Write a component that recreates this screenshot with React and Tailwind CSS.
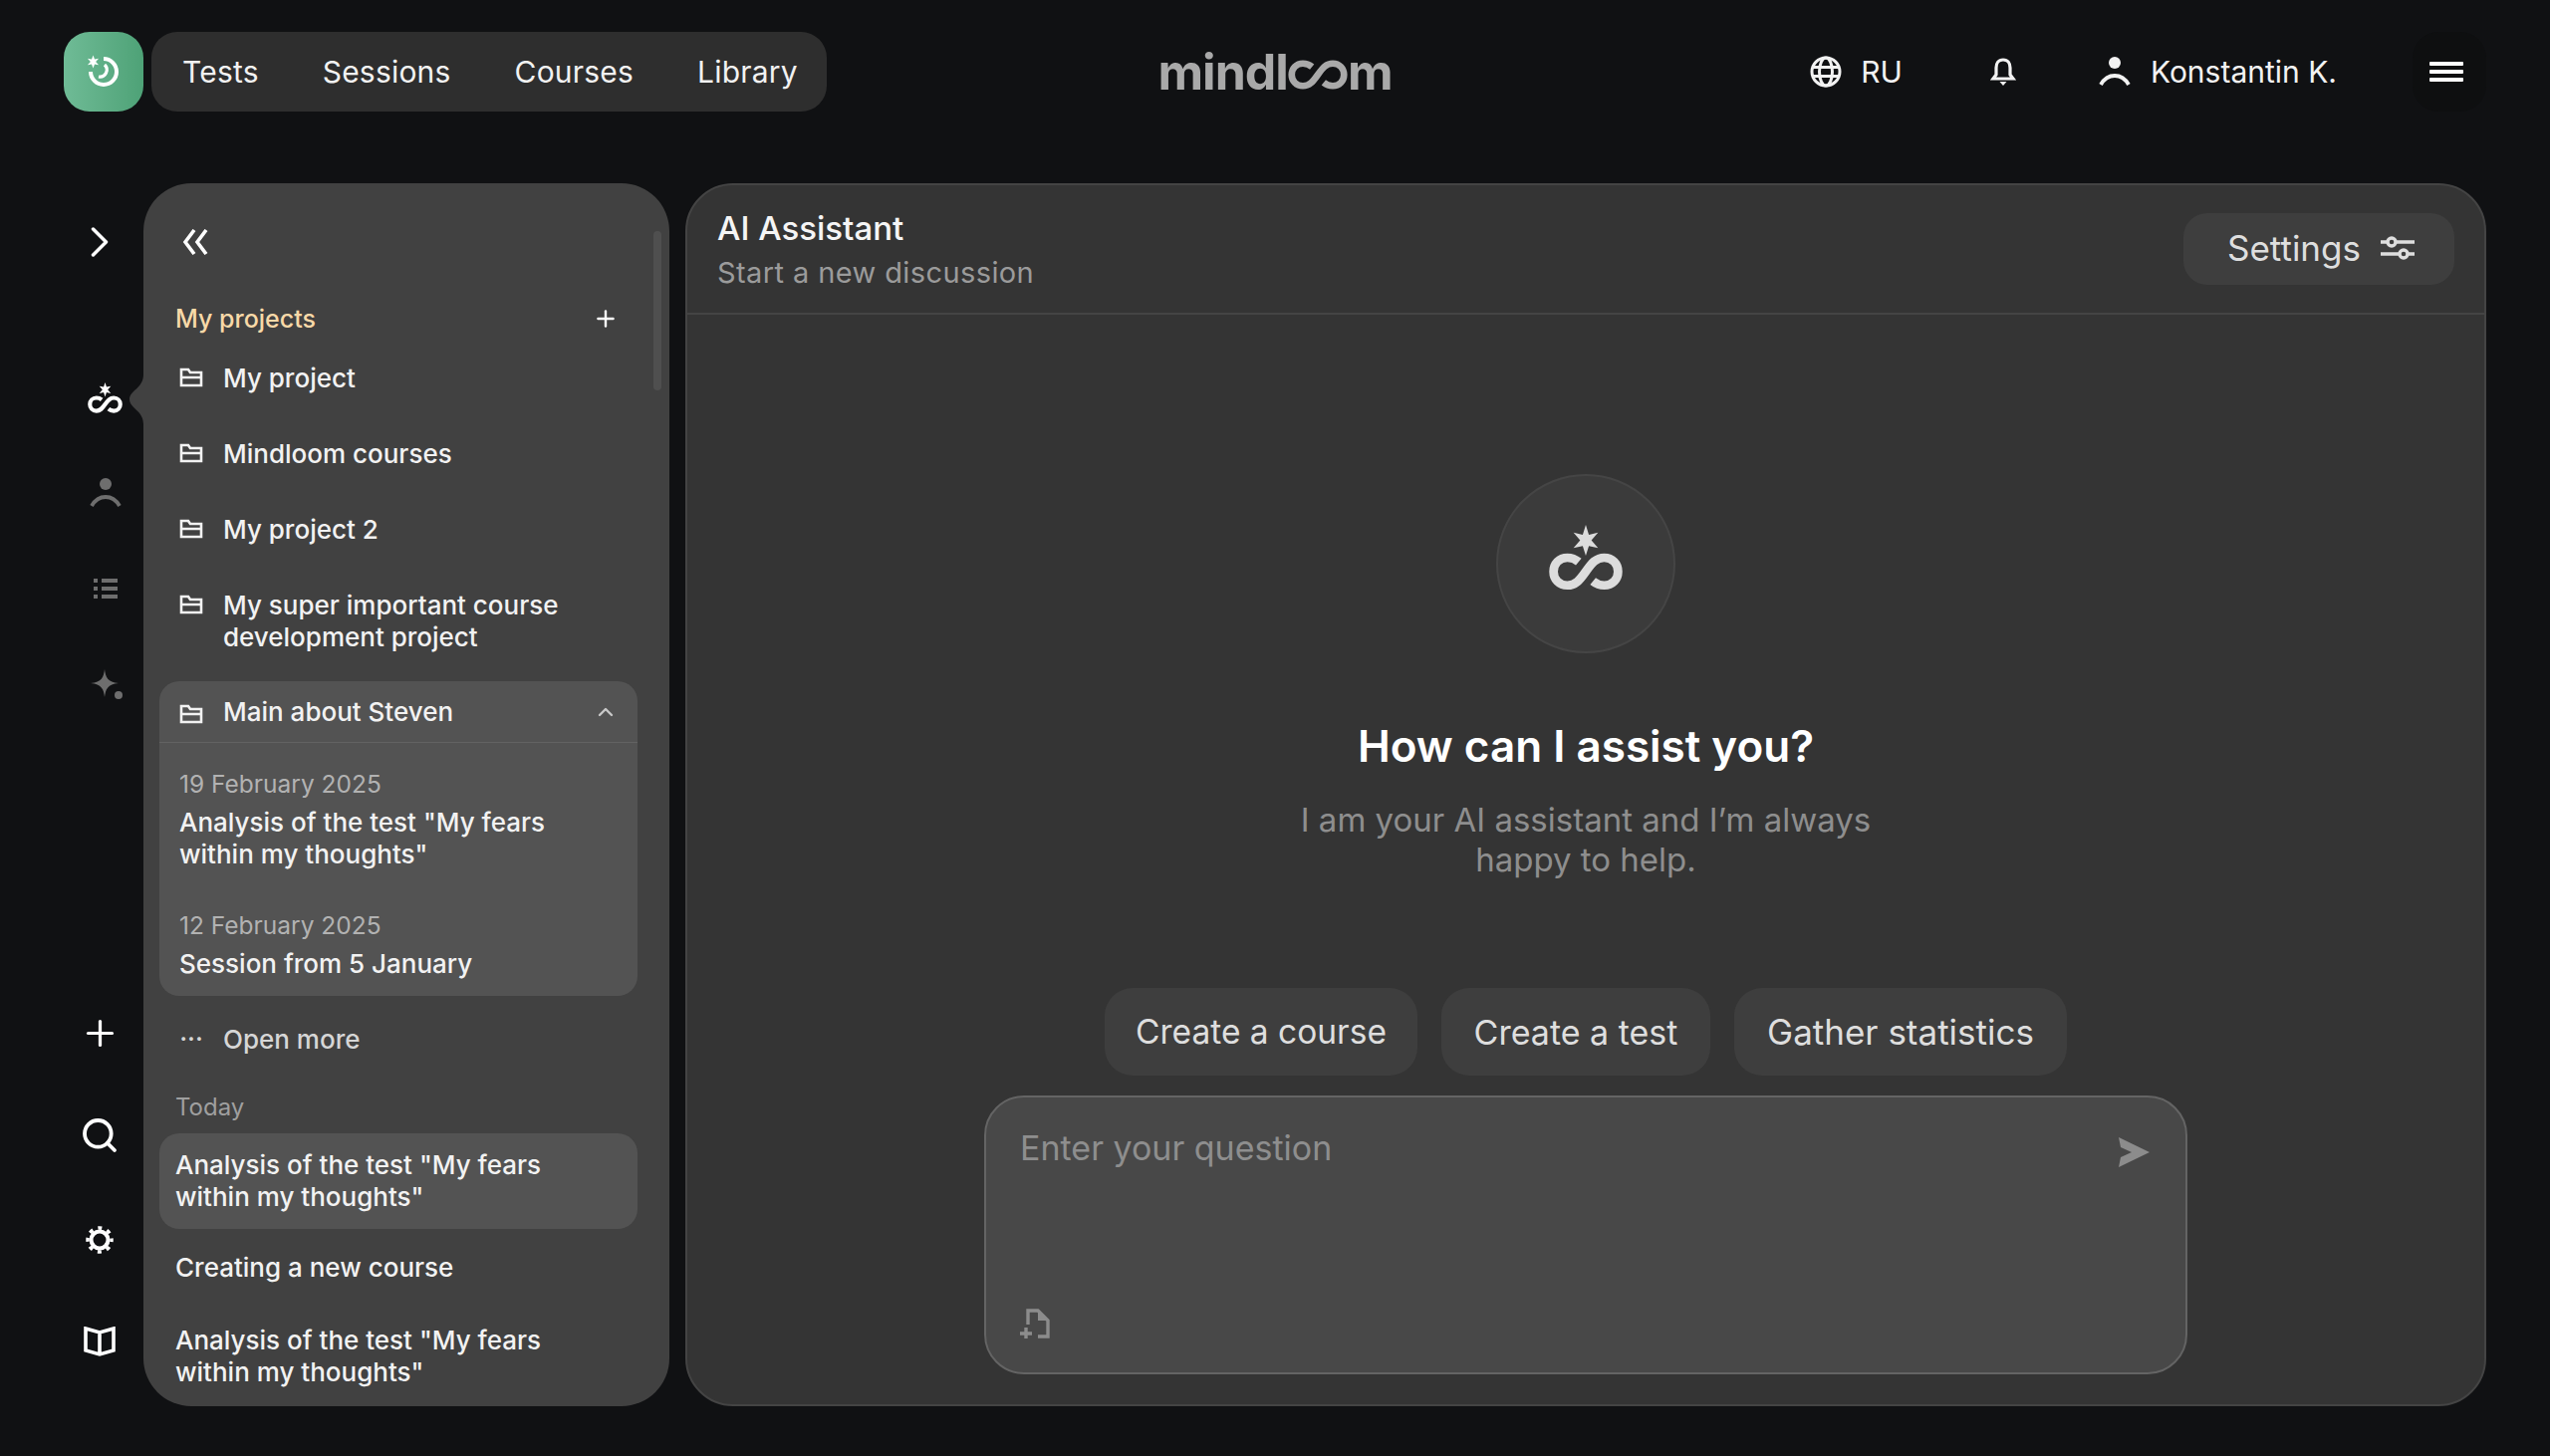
import React from 'react';
import { ChevronRight, ChevronUp, Plus, Search } from 'lucide-react';

const LOOP = 'M29 8 C26 5.5 22 4 18 4 C10 4 4.5 10 4.5 17.5 C4.5 25 10 31 18 31 C26 31 30 26 36 17.5 C42 9 46 4 54 4 C62 4 67.5 10 67.5 17.5 C67.5 25 62 31 54 31 C50 31 46 29.5 43 27';

function Loom({ className }) {
  return (
    <svg viewBox="0 0 72 64" className={className} fill="none">
      <polygon fill="currentColor" points="36,0 39,9.5 48,7.5 41.5,15 48,22.5 39,20.5 36,30 33,20.5 24,22.5 30.5,15 24,7.5 33,9.5" />
      <path stroke="currentColor" strokeWidth="8.5" transform="translate(0 28)" d={LOOP} />
    </svg>
  );
}

function Folder() {
  return (
    <svg viewBox="0 0 24 20" className="w-[24px] h-[20px] shrink-0 mt-[5px]" fill="none" stroke="currentColor" strokeWidth="2.6">
      <path d="M2 2h7l2 3h11v13H2zM2 10h20" />
    </svg>
  );
}

function User({ className }) {
  return (
    <svg viewBox="0 0 32 30" className={className} fill="none" stroke="currentColor">
      <circle cx="16" cy="6" r="6" fill="currentColor" stroke="none" />
      <path d="M2 28c4-7 9-9 14-9s10 2 14 9" strokeWidth="3.8" />
    </svg>
  );
}

function Sparkle() {
  return (
    <svg viewBox="0 0 34 30" className="w-[34px] h-[30px] text-[#6e6e6e]" fill="currentColor">
      <path d="M14 0c1 8 3 13 14 14-11 1-13 6-14 14-1-8-3-13-14-14 11-1 13-6 14-14z" />
      <circle cx="28" cy="26" r="4" />
    </svg>
  );
}

function ListIcon() {
  return (
    <svg viewBox="0 0 24 20" className="w-[24px] h-[20px] text-[#6e6e6e]" fill="currentColor">
      <rect x="0" y="0" width="4" height="4" />
      <rect x="8" y="0" width="16" height="4" />
      <rect x="0" y="8" width="4" height="4" />
      <rect x="8" y="8" width="16" height="4" />
      <rect x="0" y="16" width="4" height="4" />
      <rect x="8" y="16" width="16" height="4" />
    </svg>
  );
}

function Gear() {
  return (
    <svg viewBox="0 0 28 28" className="w-[28px] h-[28px]" fill="none" stroke="currentColor">
      <circle cx="14" cy="14" r="8.5" strokeWidth="4" />
      <circle cx="14" cy="14" r="12" strokeWidth="3.5" strokeDasharray="4 5.42" strokeDashoffset="2" />
    </svg>
  );
}

function BookIcon() {
  return (
    <svg viewBox="0 0 32 30" className="w-[32px] h-[30px]" fill="none" stroke="currentColor" strokeWidth="3.6">
      <path d="M2 2l14 4 14-4v22l-14 4-14-4zM16 6v22" />
    </svg>
  );
}

function ProjectRow({ children }) {
  return (
    <div className="flex gap-[20px] pl-[20px] pr-[16px] py-[22px] text-[26px] leading-[32px] font-medium text-[#f2f2f2]">
      <Folder />
      <span>{children}</span>
    </div>
  );
}

export default function App() {
  return (
    <div className="min-h-[1462px] bg-[#101113] font-[family-name:Inter,sans-serif] text-white overflow-hidden">
      {/* top bar */}
      <header className="grid grid-cols-[1fr_auto_1fr] items-center px-[64px] pt-[32px]">
        <div className="flex gap-[8px]">
          <div className="w-[80px] h-[80px] rounded-[26px] bg-gradient-to-r from-[#6fbb96] to-[#4ea277] flex items-center justify-center">
            <svg viewBox="0 0 32 32" className="w-[32px] h-[32px] overflow-visible" fill="none" stroke="white">
              <path d="M16 3a13 13 0 1 1-13 13" strokeWidth="4" />
              <path d="M17 9a7 7 0 0 1-6 12" strokeWidth="3.2" />
              <polygon fill="white" stroke="none" points="5.5,-0.5 7,3.4 11.1,2.8 8.1,6 11.1,9.2 7,8.6 5.5,12.5 4,8.6 -0.1,9.2 2.9,6 -0.1,2.8 4,3.4" />
            </svg>
          </div>
          <nav className="h-[80px] w-[678px] rounded-[26px] bg-[#2e2e2e] flex items-center gap-[64px] pl-[31px] text-[30px] tracking-[0.2px] text-[#f2f2f2]">
            <span>Tests</span>
            <span>Sessions</span>
            <span>Courses</span>
            <span>Library</span>
          </nav>
        </div>
        <div className="flex items-center text-[50px] leading-[50px] font-bold tracking-[-1px] text-[#a9a9a9]" aria-label="mindloom">
          <span>mindl</span>
          <svg viewBox="0 0 72 35" className="w-[60px] h-[30px] mt-[6px]" fill="none" stroke="currentColor" strokeWidth="8">
            <path d={LOOP} />
          </svg>
          <span>m</span>
        </div>
        <div className="flex items-center justify-end text-[30px] text-[#f2f2f2]">
          <svg viewBox="0 0 32 32" className="w-[32px] h-[32px]" fill="none" stroke="currentColor" strokeWidth="3">
            <circle cx="16" cy="16" r="14" />
            <ellipse cx="16" cy="16" rx="6.5" ry="14" />
            <path d="M2 11.5h28M2 20.5h28" />
          </svg>
          <span className="ml-[19px]">RU</span>
          <svg viewBox="0 0 26 28" className="w-[26px] h-[28px] ml-[88px]" fill="none" stroke="currentColor" strokeWidth="3.2">
            <path d="M13 2c-5 0-7 4-7 8v7l-3 4h20l-3-4v-7c0-4-2-8-7-8z" />
            <path d="M9.5 24h7L13 28z" fill="currentColor" stroke="none" />
          </svg>
          <User className="w-[34px] h-[30px] ml-[82px]" />
          <span className="ml-[19px]">Konstantin K.</span>
          <button className="w-[74px] h-[80px] rounded-[26px] bg-[#0e0f10] ml-[76px] pr-[6px] flex flex-col items-center justify-center gap-[4px]">
            <span className="w-[34px] h-[4px] bg-white rounded-[1px]" />
            <span className="w-[34px] h-[4px] bg-white rounded-[1px]" />
            <span className="w-[34px] h-[4px] bg-white rounded-[1px]" />
          </button>
        </div>
      </header>

      <div className="flex mt-[72px] h-[1228px] pr-[64px]">
        {/* icon rail */}
        <div className="w-[144px] shrink-0 flex flex-col text-white">
          <ChevronRight className="w-[52px] h-[52px] ml-[74px] mt-[33px]" strokeWidth={1.6} />
          <Loom className="w-[35px] h-[31px] ml-[88px] mt-[115px]" />
          <User className="w-[32px] h-[30px] ml-[90px] mt-[65px] text-[#6e6e6e]" />
          <div className="ml-[94px] mt-[71px]"><ListIcon /></div>
          <div className="ml-[91px] mt-[71px]"><Sparkle /></div>
          <Plus className="w-[41px] h-[41px] ml-[80px] mt-[315px]" strokeWidth={1.9} />
          <Search className="w-[40px] h-[40px] ml-[80px] mt-[62px]" strokeWidth={2.3} />
          <div className="ml-[86px] mt-[71px]"><Gear /></div>
          <div className="ml-[84px] mt-[73px]"><BookIcon /></div>
        </div>

        {/* projects panel */}
        <aside className="relative w-[528px] shrink-0 rounded-[48px] bg-[#414141] pl-[16px] pr-[32px]">
          <svg viewBox="0 0 14 50" className="absolute left-[-14px] top-[192px] w-[14px] h-[50px] text-[#414141]" fill="currentColor">
            <path d="M14 0C14 14 0 16 0 25s14 11 14 25z" />
          </svg>
          <div className="absolute right-[8px] top-[48px] w-[8px] h-[160px] rounded-full bg-[#4f4f4f]" />
          <div className="h-full overflow-hidden rounded-b-[48px]">
            <svg viewBox="0 0 26 26" className="w-[26px] h-[26px] ml-[23px] mt-[46px]" fill="none" stroke="currentColor" strokeWidth="3.6">
              <path d="M12 1L3 13l9 12M24 1l-9 12 9 12" />
            </svg>
            <div className="flex items-center justify-between mt-[48px] pl-[16px] pr-[19px] h-[32px] text-[25px] leading-[32px] font-medium text-[#f8d9a8]">
              <span>My projects</span>
              <Plus className="w-[26px] h-[26px] text-white" strokeWidth={2.2} />
            </div>
            <div className="mt-[6px]">
              <ProjectRow>My project</ProjectRow>
              <ProjectRow>Mindloom courses</ProjectRow>
              <ProjectRow>My project 2</ProjectRow>
              <ProjectRow>My super important course development project</ProjectRow>
            </div>
            <div className="mt-[6px] rounded-[20px] bg-[#535353] h-[316px]">
              <div className="flex items-center gap-[20px] pl-[20px] pr-[20px] h-[62px] text-[26px] font-medium text-[#f2f2f2] border-b border-[#626262]">
                <Folder />
                <span className="flex-1">Main about Steven</span>
                <ChevronUp className="w-[24px] h-[24px] text-[#c8c8c8]" strokeWidth={2.4} />
              </div>
              <div className="pl-[20px] pr-[16px] pt-[25px] text-[26px] leading-[32px] font-medium text-[#f2f2f2]">
                <div className="text-[24.5px] font-normal text-[#b2b2b2]">19 February 2025</div>
                <div className="mt-[7px]">Analysis of the test "My fears within my thoughts"</div>
                <div className="mt-[39px] text-[24.5px] font-normal text-[#b2b2b2]">12 February 2025</div>
                <div className="mt-[7px]">Session from 5 January</div>
              </div>
            </div>
            <div className="flex items-center gap-[20px] mt-[27px] pl-[20px] h-[32px] text-[26px] font-medium text-[#d6d6d6]">
              <span className="w-[24px] text-center leading-[20px]">···</span>
              <span>Open more</span>
            </div>
            <div className="mt-[37px] pl-[16px] text-[24px] leading-[32px] text-[#9f9f9f]">Today</div>
            <div className="mt-[10px] text-[26px] leading-[32px] font-medium text-[#f2f2f2]">
              <div className="rounded-[20px] bg-[#535353] p-[16px]">Analysis of the test "My fears within my thoughts"</div>
              <div className="mt-[7px] p-[16px]">Creating a new course</div>
              <div className="mt-[9px] p-[16px]">Analysis of the test "My fears within my thoughts"</div>
            </div>
          </div>
        </aside>

        {/* assistant */}
        <main className="ml-[16px] flex-1 rounded-[48px] bg-[#343434] border-2 border-[#444444] flex flex-col">
          <div className="flex items-center justify-between h-[130px] border-b-2 border-[#444444] pl-[30px] pr-[30px]">
            <div>
              <div className="text-[33px] leading-[40px] font-medium text-[#f5f5f5]">AI Assistant</div>
              <div className="mt-[7px] text-[29px] leading-[36px] text-[#9b9b9b] tracking-[0.4px]">Start a new discussion</div>
            </div>
            <button className="w-[272px] h-[72px] rounded-[24px] bg-[#3e3e3e] flex items-center justify-center gap-[20px] pl-[4px] pb-[2px] text-[35px] text-[#dedede]">
              <span>Settings</span>
              <svg viewBox="0 0 34 26" className="w-[34px] h-[26px]" fill="none" stroke="currentColor" strokeWidth="3.4">
                <path d="M0 7h7M15 7h19M0 19h19M27 19h7" />
                <circle cx="11" cy="7" r="4" />
                <circle cx="23" cy="19" r="4" />
              </svg>
            </button>
          </div>
          <div className="flex-1 flex flex-col items-center">
            <div className="mt-[160px] w-[180px] h-[180px] rounded-full bg-[#3b3b3b] border-2 border-[#454545] flex items-center justify-center">
              <Loom className="w-[74px] h-[66px] mb-[12px] text-[#dcdcdc]" />
            </div>
            <h1 className="mt-[65px] text-[44px] leading-[56px] font-semibold text-white">How can I assist you?</h1>
            <p className="mt-[26px] w-[640px] text-center text-[33px] leading-[40px] text-[#8e8e8e]">I am your AI assistant and I’m always happy to help.</p>
            <div className="mt-[109px] flex gap-[24px]">
              <div className="w-[314px] h-[88px] rounded-[28px] bg-[#3e3e3e] flex items-center justify-center text-[33.5px] text-[#dedede]">Create a course</div>
              <div className="w-[270px] h-[88px] rounded-[28px] bg-[#3e3e3e] flex items-center justify-center text-[34px] text-[#dedede]">Create a test</div>
              <div className="w-[334px] h-[88px] rounded-[28px] bg-[#3e3e3e] flex items-center justify-center text-[35px] text-[#dedede]">Gather statistics</div>
            </div>
            <div className="mt-[20px] w-[1208px] h-[280px] rounded-[40px] bg-[#484848] border-2 border-[#646464] flex flex-col justify-between pl-[34px] pr-[36px] pt-[31px] pb-[34px]">
              <div className="flex items-start justify-between">
                <span className="text-[34px] leading-[40px] text-[#8e8e8e]">Enter your question</span>
                <svg viewBox="0 0 32 30" className="w-[32px] h-[30px] mt-[9px] text-[#8c8c8c]" fill="currentColor">
                  <path d="M1 0l31 15L1 30l2-10 11-5-11-5z" />
                </svg>
              </div>
              <svg viewBox="0 0 30 30" className="w-[30px] h-[30px] text-[#8c8c8c]" fill="none" stroke="currentColor" strokeWidth="3.4">
                <path d="M8 16V2h10l10 10v16H18M0 25h12M6 19v11" />
                <path d="M18 2v10h10z" fill="currentColor" stroke="none" />
              </svg>
            </div>
          </div>
        </main>
      </div>
    </div>
  );
}
